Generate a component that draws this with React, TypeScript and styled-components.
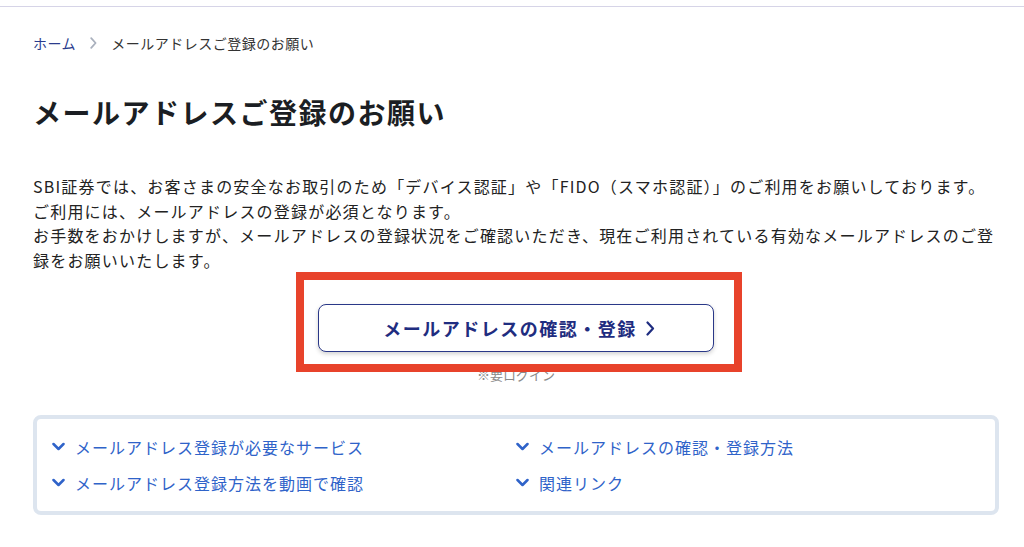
import React from "react";
import styled, { createGlobalStyle } from "styled-components";

const GlobalStyle = createGlobalStyle`
  html, body {
    margin: 0;
    padding: 0;
    background: #fff;
  }
  body {
    font-family: "Noto Sans CJK JP", "Noto Sans", sans-serif;
    color: #222;
  }
`;

type LinkItem = {
  label: string;
};

const links: LinkItem[] = [
  { label: "メールアドレス登録が必要なサービス" },
  { label: "メールアドレスの確認・登録方法" },
  { label: "メールアドレス登録方法を動画で確認" },
  { label: "関連リンク" },
];

const ChevronDown = () => (
  <Icon width="13" height="10" viewBox="0 0 13 10" fill="none">
    <polyline
      points="1.5,2 6.5,7 11.5,2"
      stroke="#2f63c9"
      strokeWidth="2.5"
      strokeLinecap="round"
      strokeLinejoin="round"
    />
  </Icon>
);

const ChevronRight = ({ color, size }: { color: string; size: number }) => (
  <Icon width={size * 0.6} height={size} viewBox="0 0 9 15" fill="none">
    <polyline
      points="1.5,1.5 7,7.5 1.5,13.5"
      stroke={color}
      strokeWidth="2.2"
      strokeLinecap="round"
      strokeLinejoin="round"
    />
  </Icon>
);

const App = () => {
  return (
    <>
      <GlobalStyle />
      <TopLine />
      <Page>
        <Breadcrumb>
          <Crumb href="#">ホーム</Crumb>
          <Sep>
            <ChevronRight color="#a9b0bd" size={12} />
          </Sep>
          <Current>メールアドレスご登録のお願い</Current>
        </Breadcrumb>

        <Title>メールアドレスご登録のお願い</Title>

        <Lead>
          SBI証券では、お客さまの安全なお取引のため「デバイス認証」や「FIDO（スマホ認証）」のご利用をお願いしております。
          <br />
          ご利用には、メールアドレスの登録が必須となります。
          <br />
          お手数をおかけしますが、メールアドレスの登録状況をご確認いただき、現在ご利用されている有効なメールアドレスのご登録をお願いいたします。
        </Lead>

        <ButtonWrap>
          <MainButton>
            メールアドレスの確認・登録
            <ChevronRight color="#1f2d80" size={15} />
          </MainButton>
          <Highlight />
        </ButtonWrap>
        <Note>※要ログイン</Note>

        <LinkBox>
          {links.map((link) => (
            <LinkRow key={link.label} href="#">
              <ChevronDown />
              <span>{link.label}</span>
            </LinkRow>
          ))}
        </LinkBox>
      </Page>
    </>
  );
};

const Icon = styled.svg`
  flex-shrink: 0;
  display: block;
`;

const TopLine = styled.div`
  height: 6px;
  border-bottom: 1px solid #d6d4e7;
`;

const Page = styled.main`
  width: 966px;
  padding: 26px 0 0 33px;
`;

const Breadcrumb = styled.nav`
  display: flex;
  align-items: center;
  height: 20px;
  font-size: 14px;
  letter-spacing: 0.5px;
`;

const Crumb = styled.a`
  color: #2b3c8d;
  text-decoration: none;
`;

const Sep = styled.span`
  display: flex;
  align-items: center;
  margin: 0 14px 0 14px;
`;

const Current = styled.span`
  color: #333;
`;

const Title = styled.h1`
  margin: 39px 0 0;
  font-size: 28px;
  line-height: 40px;
  font-weight: 700;
  letter-spacing: 1.5px;
  color: #1b1e23;
`;

const Lead = styled.p`
  margin: 42px 0 0;
  font-size: 16px;
  line-height: 24.5px;
  letter-spacing: 1.2px;
  color: #222;
`;

const ButtonWrap = styled.div`
  position: relative;
  width: 396px;
  margin: 32px auto 0;
`;

const MainButton = styled.button`
  width: 396px;
  height: 48px;
  display: flex;
  align-items: center;
  justify-content: center;
  gap: 9px;
  padding: 0 0 0 6px;
  background: #fff;
  border: 1.5px solid #2a3888;
  border-radius: 8px;
  box-shadow: 0 2px 4px rgba(0, 0, 0, 0.18);
  font-family: inherit;
  font-size: 18px;
  font-weight: 700;
  letter-spacing: 1.5px;
  color: #1f2d80;
  cursor: pointer;
`;

const Highlight = styled.div`
  position: absolute;
  top: -32px;
  left: -22px;
  right: -28px;
  bottom: -20px;
  border: 8px solid #e8432b;
  pointer-events: none;
  z-index: 1;
`;

const Note = styled.p`
  margin: 14px 0 0;
  text-align: center;
  font-size: 13px;
  line-height: 18px;
  color: #8a8a8a;
`;

const LinkBox = styled.div`
  margin-top: 31px;
  display: grid;
  grid-template-columns: 1fr 1fr;
  row-gap: 12px;
  padding: 16px 15px;
  border: 4px solid #dde5ef;
  border-radius: 8px;
`;

const LinkRow = styled.a`
  display: flex;
  align-items: center;
  gap: 10px;
  font-size: 16px;
  line-height: 24px;
  letter-spacing: 1px;
  color: #2f63c9;
  text-decoration: none;
`;

export default App;
